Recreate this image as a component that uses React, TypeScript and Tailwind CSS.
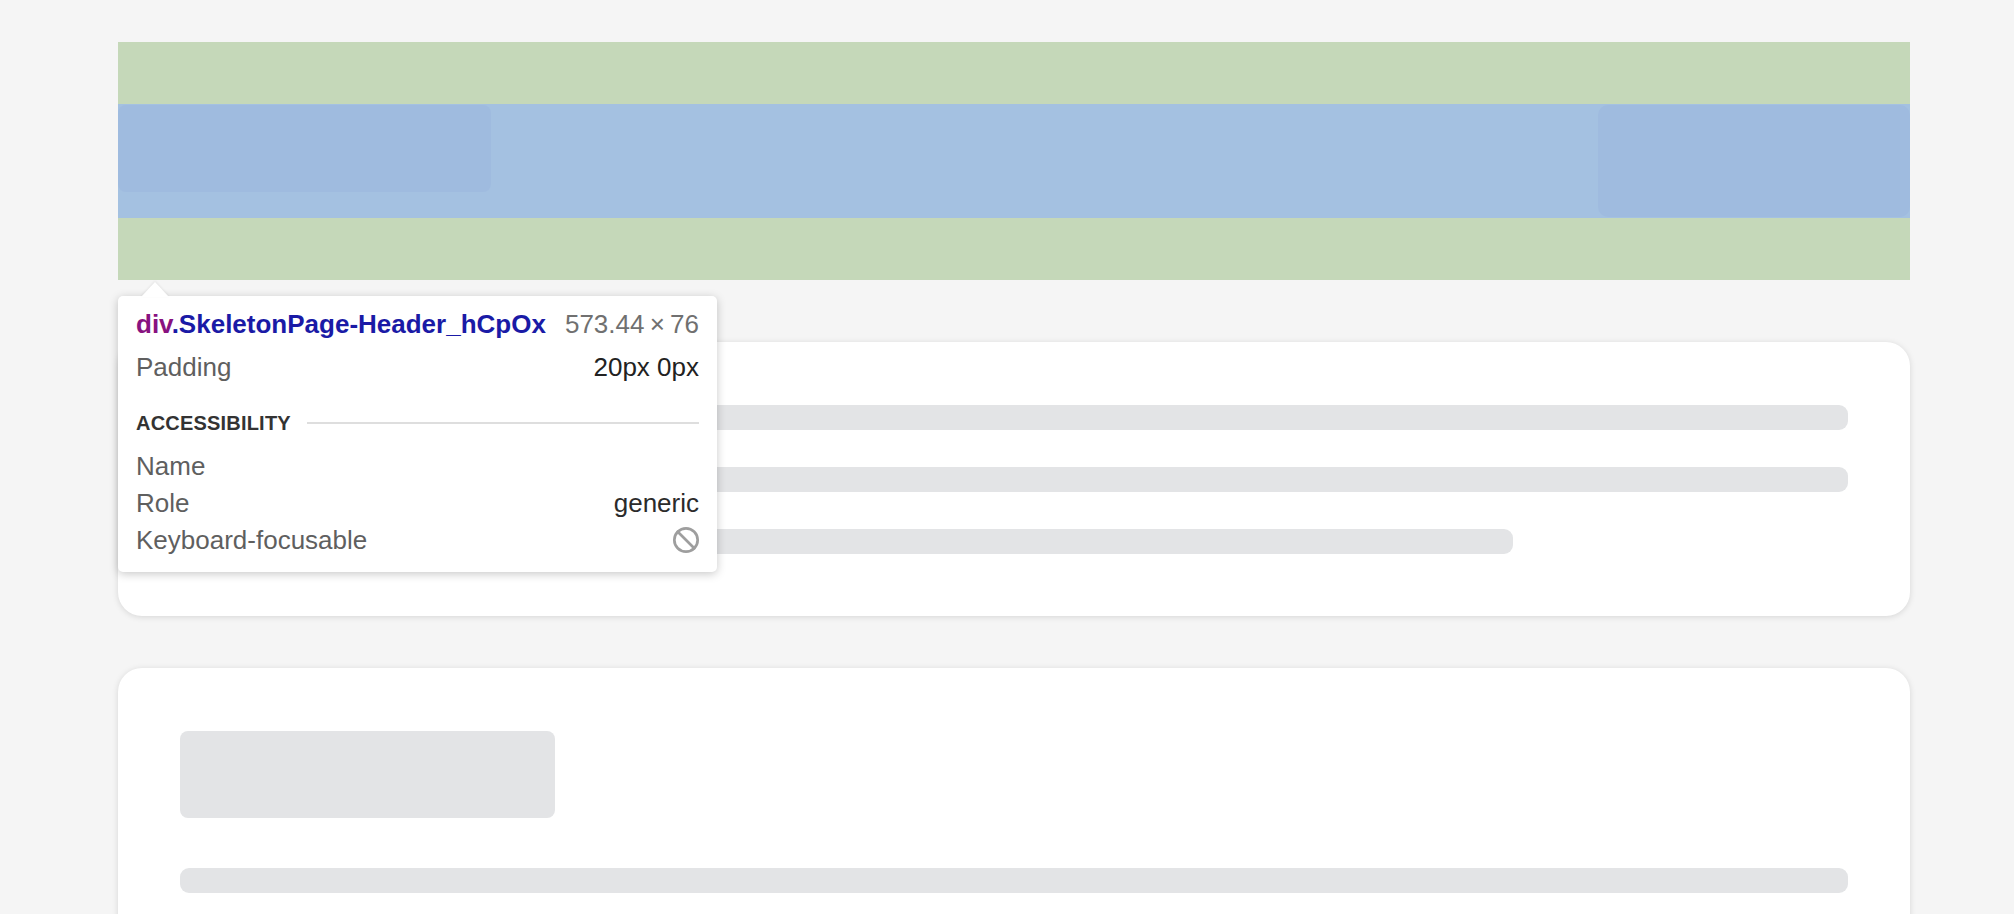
import { Ban } from "lucide-react";

const font = { fontFamily: '"Liberation Sans", Arial, sans-serif' };

function Bar({ width = "full" }: { width?: "full" | "short" }) {
  return (
    <div
      className={
        width === "full"
          ? "h-[25px] w-full rounded-[9px] bg-[#e3e4e6]"
          : "h-[25px] w-[1333px] rounded-[9px] bg-[#e3e4e6]"
      }
    />
  );
}

function Card({ children, className = "" }: { children: React.ReactNode; className?: string }) {
  return (
    <section
      className={
        "rounded-[24px] bg-white px-[62px] pt-[63px] pb-[62px] shadow-[0_1px_6px_rgba(0,0,0,0.13)] " +
        className
      }
    >
      {children}
    </section>
  );
}

function TooltipRow({ label, value }: { label: string; value?: React.ReactNode }) {
  return (
    <div className="flex h-[37px] items-center justify-between">
      <span className="text-[#5f5f5f]">{label}</span>
      {value}
    </div>
  );
}

function InspectTooltip() {
  return (
    <div
      className="absolute top-[296px] left-[118px] w-[599px] rounded-[5px] bg-white px-[18px] pt-[9px] pb-[14px] text-[26px] leading-none shadow-[0_2px_10px_rgba(0,0,0,0.22)]"
      style={font}
    >
      <svg
        className="absolute -top-[14px] left-[23px] drop-shadow-[0_-1px_1px_rgba(0,0,0,0.08)]"
        width="28"
        height="15"
        viewBox="0 0 28 15"
      >
        <path d="M0 15 L14 0 L28 15 Z" fill="#ffffff" />
      </svg>

      <div className="flex h-[38px] items-center justify-between">
        <span className="font-bold">
          <span className="text-[#881280]">div</span>
          <span className="text-[#1a1aa6]">.SkeletonPage-Header_hCpOx</span>
        </span>
        <span className="text-[#707070]">573.44{"\u2009×\u2009"}76</span>
      </div>

      <div className="mt-[5px] flex h-[38px] items-center justify-between">
        <span className="text-[#5f5f5f]">Padding</span>
        <span className="text-[#222222]">20px 0px</span>
      </div>

      <div className="mt-[18px] flex h-[38px] items-center gap-[16px]">
        <span className="text-[20px] font-semibold tracking-[0.01em] text-[#333333]">
          ACCESSIBILITY
        </span>
        <div className="h-[2px] flex-1 bg-[#dedede]" />
      </div>

      <div className="mt-[5px]">
        <TooltipRow label="Name" />
        <TooltipRow label="Role" value={<span className="text-[#2b2b2b]">generic</span>} />
        <TooltipRow
          label="Keyboard-focusable"
          value={<Ban size={28} strokeWidth={2.3} className="-mr-px text-[#9e9e9e]" />}
        />
      </div>
    </div>
  );
}

export default function App() {
  return (
    <div className="relative min-h-screen overflow-hidden bg-[#f5f5f5] pt-[42px] pr-[104px] pl-[118px]">
      {/* header highlighted by the inspector: padding in green, content in blue */}
      <div className="bg-[#c5d8b9] py-[62px]">
        <div className="flex h-[114px] items-start justify-between bg-[#a4c1e1]">
          <div className="mt-px h-[87px] w-[373px] rounded-[8px] bg-[#9fbbdf]" />
          <div className="mt-px h-[112px] w-[312px] rounded-[10px] bg-[#9fbbdf]" />
        </div>
      </div>

      <Card className="mt-[62px]">
        <div className="flex flex-col gap-[37px]">
          <Bar />
          <Bar />
          <Bar width="short" />
        </div>
      </Card>

      <Card className="mt-[52px]">
        <div className="h-[87px] w-[375px] rounded-[8px] bg-[#e3e4e6]" />
        <div className="mt-[50px] flex flex-col gap-[37px]">
          <Bar />
          <Bar />
          <Bar width="short" />
        </div>
      </Card>

      <InspectTooltip />
    </div>
  );
}
